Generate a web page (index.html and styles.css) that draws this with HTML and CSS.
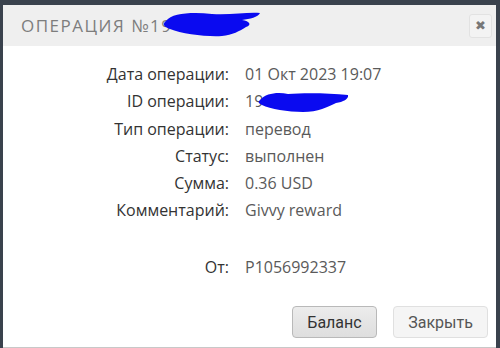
FILE: index.html
```html
<!DOCTYPE html>
<html lang="ru">
<head>
<meta charset="utf-8">
<link rel="stylesheet" href="styles.css">
</head>
<body>
<div class="dialog">
  <div class="header">
    <div class="title">ОПЕРАЦИЯ №19<svg class="blob blob-title" viewBox="0 0 100 28" width="100" height="28"><path d="M4 12 C10 4 30 3 50 5 C70 6 85 3 98 4 C96 8 88 10 80 11 C88 12 90 16 84 18 C78 22 70 26 60 27 C45 28 20 25 8 20 C2 18 0 15 4 12 Z" fill="#0a0af0"/></svg></div>
    <button class="close" type="button">✖</button>
  </div>
  <div class="body">
    <div class="info">
      <div class="label">Дата операции:</div><div class="value">01 Окт 2023 19:07</div>
      <div class="label">ID операции:</div><div class="value id">19<svg class="blob blob-id" viewBox="0 0 92 22" width="92" height="22"><path d="M2 9 C8 2 20 1 30 3 C45 2 70 2 90 4 C91 8 85 11 78 12 C70 16 60 21 45 21 C30 21 12 18 4 14 C0 12 0 11 2 9 Z" fill="#0a0af0"/></svg></div>
      <div class="label">Тип операции:</div><div class="value">перевод</div>
      <div class="label">Статус:</div><div class="value">выполнен</div>
      <div class="label">Сумма:</div><div class="value">0.36 USD</div>
      <div class="label">Комментарий:</div><div class="value">Givvy reward</div>
    </div>
    <div class="info from">
      <div class="label">От:</div><div class="value">P1056992337</div>
    </div>
  </div>
  <div class="footer">
    <button class="btn btn-primary" type="button">Баланс</button>
    <button class="btn btn-light" type="button">Закрыть</button>
  </div>
</div>
</body>
</html>
```
FILE: styles.css
```css
html, body {
  margin: 0;
  padding: 0;
  height: 100%;
}
body {
  background: #3a424d;
  padding: 5px 4px 0 3px;
  box-sizing: border-box;
  overflow: hidden;
  font-family: "Open Sans", "Liberation Sans", sans-serif;
}
.dialog {
  background: #fff;
  height: 342px;
  border-bottom: 1px solid #c8c8c8;
  display: flex;
  flex-direction: column;
}
.header {
  height: 41px;
  background: #efefef;
  display: flex;
  align-items: center;
  justify-content: space-between;
  padding: 0 4px 0 18px;
}
.title {
  position: relative;
  font-size: 17px;
  letter-spacing: 1.5px;
  color: #7d7d7d;
  font-weight: 500;
  margin-top: -1px;
}
.blob {
  position: absolute;
}
.blob-title {
  left: 141px;
  top: -5px;
}
.close {
  width: 23px;
  height: 24px;
  padding: 0;
  border: 1px solid #e2e2e2;
  border-radius: 3px;
  background: #f3f3f3;
  color: #777;
  font-size: 13px;
  line-height: 22px;
  font-family: "DejaVu Sans", sans-serif;
  font-weight: bold;
}
.body {
  flex: 1;
  padding-top: 15px;
}
.info {
  display: grid;
  grid-template-columns: 226px auto;
  column-gap: 16px;
  row-gap: 0;
  font-size: 16px;
  line-height: 27.3px;
}
.label {
  text-align: right;
  color: #333;
  font-weight: 500;
}
.value {
  color: #5a5a5a;
}
.id {
  position: relative;
}
.blob-id {
  left: 13px;
  top: 3px;
}
.from {
  margin-top: 29px;
}
.footer {
  display: flex;
  justify-content: flex-end;
  gap: 16px;
  padding: 0 8px 9px 0;
}
.btn {
  height: 32px;
  border-radius: 4px;
  font-family: Roboto, "Liberation Sans", sans-serif;
  font-size: 16px;
  padding: 0;
}
.btn-primary {
  width: 85px;
  background: linear-gradient(#ececec, #dedede);
  border: 1px solid #b9b9b9;
  color: #333;
}
.btn-light {
  width: 95px;
  background: #f5f5f5;
  border: 1px solid #e0e0e0;
  color: #555;
}
```
